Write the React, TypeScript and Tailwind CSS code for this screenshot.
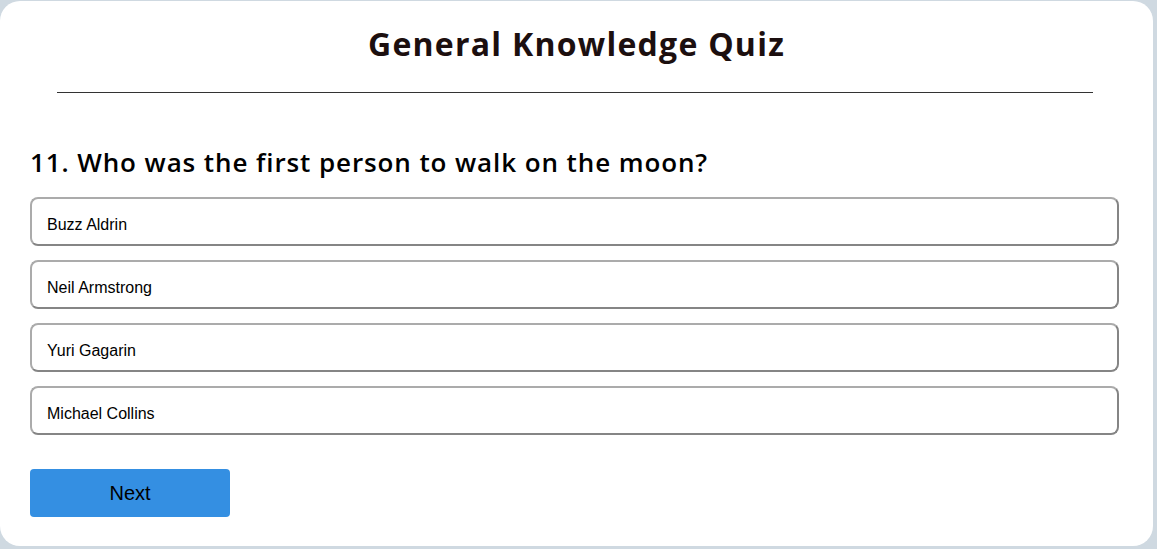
const options = ["Buzz Aldrin", "Neil Armstrong", "Yuri Gagarin", "Michael Collins"];

export default function App() {
  return (
    <div className="h-[549px] w-[1157px] overflow-hidden bg-[#cfd9e1] pt-px">
      <div className="flex h-[545px] w-[1153px] flex-col rounded-[20px] bg-white px-[30px]">
        <h1 className="mt-[21px] text-center font-['Open_Sans',sans-serif] text-[32px] font-bold leading-[44px] tracking-[1.25px] text-[#1c0f0f]">
          General Knowledge Quiz
        </h1>
        <hr className="ml-[27px] mt-[26px] w-[1036px] border-t border-[#333]" />
        <h2 className="mt-[52px] font-['Open_Sans',sans-serif] text-[26px] font-semibold leading-[34px] tracking-[0.9px] text-black">
          11. Who was the first person to walk on the moon?
        </h2>
        <div className="mt-[18px] flex w-[1089px] flex-col gap-[14px]">
          {options.map((o) => (
            <button
              key={o}
              className="h-[49px] w-full rounded-[8px] border-2 border-t-[#ababab] border-l-[#ababab] border-r-[#858585] border-b-[#858585] bg-white px-[15px] pt-[6px] text-left font-['Liberation_Sans',Arial,sans-serif] text-[16px] text-black"
            >
              {o}
            </button>
          ))}
        </div>
        <button className="mt-[34px] h-[48px] w-[200px] rounded-[4px] bg-[#348fe2] font-['Liberation_Sans',Arial,sans-serif] text-[20px] text-black">
          Next
        </button>
      </div>
    </div>
  );
}
